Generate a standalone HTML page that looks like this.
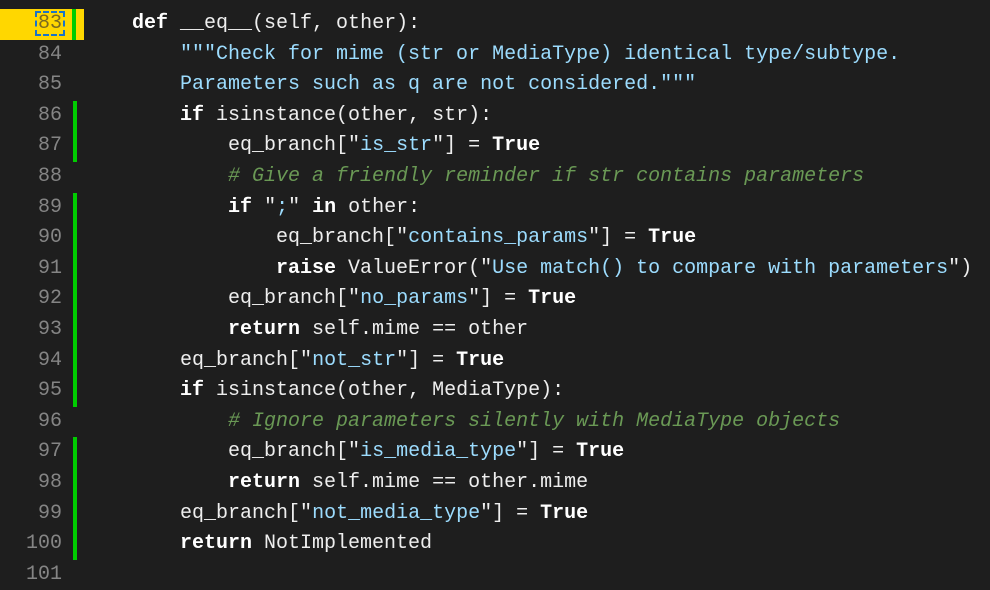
<!DOCTYPE html>
<html><head><meta charset="utf-8"><style>
html,body{margin:0;padding:0;background:#1e1e1e;width:990px;height:568px;overflow:hidden}
#c{position:absolute;top:-21.6px;left:0;width:990px}
.l{position:relative;height:30.6px;line-height:30.6px;font-family:"Liberation Mono",monospace;font-size:20px;white-space:pre;color:#eeeeee}
.n{position:absolute;left:0;width:62px;text-align:right;color:#858585}
.g{position:absolute;left:73px;top:0;width:4px;height:30.6px;background:#00cc00}
.t{position:absolute;left:84px}
.k{font-weight:bold;color:#ffffff}
.s{color:#9cdcfe}
.q{color:#eeeeee}
.c{color:#6a9955;font-style:italic}
.hl{position:absolute;left:0;top:0;width:84px;height:30.6px;background:#ffd700}
.box{position:absolute;left:35px;top:2px;width:30px;height:25px;border:2px dashed #1a73c8;box-sizing:border-box}
</style></head><body><div id="c">
<div class="l"><span class="n">82</span></div>
<div class="l"><span class="hl"></span><span class="box"></span><span class="n" style="color:#7a6a20">83</span><span class="g" style="left:72px"></span><span class="t">    <span class="k">def</span> __eq__(self, other):</span></div>
<div class="l"><span class="n">84</span><span class="t">        <span class="s">"""Check for mime (str or MediaType) identical type/subtype.</span></span></div>
<div class="l"><span class="n">85</span><span class="t">        <span class="s">Parameters such as q are not considered."""</span></span></div>
<div class="l"><span class="n">86</span><span class="g"></span><span class="t">        <span class="k">if</span> isinstance(other, str):</span></div>
<div class="l"><span class="n">87</span><span class="g"></span><span class="t">            eq_branch[<span class="q">"</span><span class="s">is_str</span><span class="q">"</span>] = <span class="k">True</span></span></div>
<div class="l"><span class="n">88</span><span class="t">            <span class="c"># Give a friendly reminder if str contains parameters</span></span></div>
<div class="l"><span class="n">89</span><span class="g"></span><span class="t">            <span class="k">if</span> <span class="q">"</span><span class="s">;</span><span class="q">"</span> <span class="k">in</span> other:</span></div>
<div class="l"><span class="n">90</span><span class="g"></span><span class="t">                eq_branch[<span class="q">"</span><span class="s">contains_params</span><span class="q">"</span>] = <span class="k">True</span></span></div>
<div class="l"><span class="n">91</span><span class="g"></span><span class="t">                <span class="k">raise</span> ValueError(<span class="q">"</span><span class="s">Use match() to compare with parameters</span><span class="q">"</span>)</span></div>
<div class="l"><span class="n">92</span><span class="g"></span><span class="t">            eq_branch[<span class="q">"</span><span class="s">no_params</span><span class="q">"</span>] = <span class="k">True</span></span></div>
<div class="l"><span class="n">93</span><span class="g"></span><span class="t">            <span class="k">return</span> self.mime == other</span></div>
<div class="l"><span class="n">94</span><span class="g"></span><span class="t">        eq_branch[<span class="q">"</span><span class="s">not_str</span><span class="q">"</span>] = <span class="k">True</span></span></div>
<div class="l"><span class="n">95</span><span class="g"></span><span class="t">        <span class="k">if</span> isinstance(other, MediaType):</span></div>
<div class="l"><span class="n">96</span><span class="t">            <span class="c"># Ignore parameters silently with MediaType objects</span></span></div>
<div class="l"><span class="n">97</span><span class="g"></span><span class="t">            eq_branch[<span class="q">"</span><span class="s">is_media_type</span><span class="q">"</span>] = <span class="k">True</span></span></div>
<div class="l"><span class="n">98</span><span class="g"></span><span class="t">            <span class="k">return</span> self.mime == other.mime</span></div>
<div class="l"><span class="n">99</span><span class="g"></span><span class="t">        eq_branch[<span class="q">"</span><span class="s">not_media_type</span><span class="q">"</span>] = <span class="k">True</span></span></div>
<div class="l"><span class="n">100</span><span class="g"></span><span class="t">        <span class="k">return</span> NotImplemented</span></div>
<div class="l"><span class="n">101</span></div>
</div></body></html>
